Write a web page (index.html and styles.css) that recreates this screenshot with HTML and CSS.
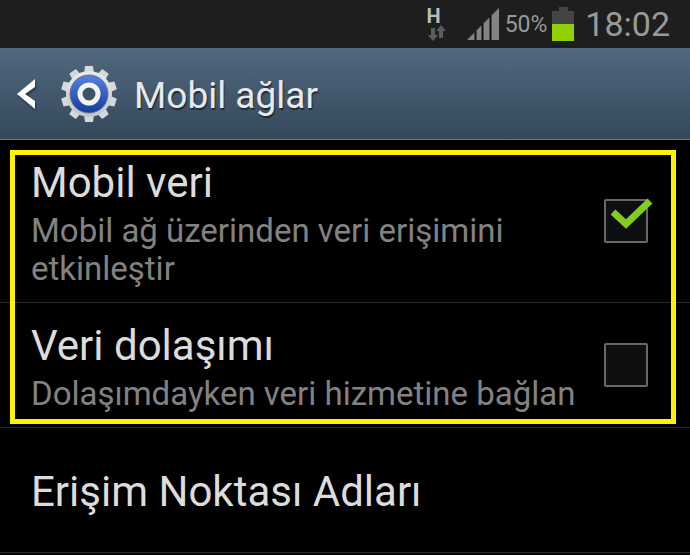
FILE: index.html
```html
<!DOCTYPE html>
<html lang="tr">
<head>
    <meta charset="UTF-8">
    <meta name="viewport" content="width=device-width, initial-scale=1.0">
    <title>Mobil ağlar</title>
    <link rel="stylesheet" href="styles.css">
</head>
<body>
    <div class="status-bar">
        <div class="network">
            <span class="network-type">H</span>
            <svg width="20" height="16" viewBox="0 0 20 16" fill="#5c5c5c">
                <path d="M4 3h4v7h3l-5 6-5-6h3z"/>
                <path d="M12 13h4V6h3l-5-6-5 6h3z"/>
            </svg>
        </div>
        <svg class="signal" width="32" height="32" viewBox="0 0 32 32">
            <path d="M0 32L32 0V32z" fill="#848484"/>
            <path d="M8 23v9M15 16v16M23 8v24" transform="translate(.5 0)" stroke="#101010" stroke-width="2"/>
        </svg>
        <span class="percent">50%</span>
        <svg class="battery" width="22" height="34" viewBox="0 0 22 34">
            <path d="M0 4h7V0h9v4h6v13H0z" fill="#444"/>
            <path d="M0 17h22v17H0z" fill="#90d000"/>
        </svg>
        <span class="clock">18:02</span>
    </div>

    <header class="header">
        <button class="back-btn" type="button" aria-label="Geri">
            <svg width="20" height="30" viewBox="0 0 20 30">
                <path d="M19 0v8L9 15l10 7v8L1 15z" fill="#fff"/>
            </svg>
        </button>
        <svg class="gear" width="56" height="56" viewBox="-28 -28 56 56">
            <defs>
                <linearGradient id="metal" x1="0" y1="0" x2="0" y2="1">
                    <stop offset="0" stop-color="#e8eaec"/>
                    <stop offset="1" stop-color="#c4c6c9"/>
                </linearGradient>
                <linearGradient id="blue" x1="0" y1="0" x2="0" y2="1">
                    <stop offset="0" stop-color="#5683e2"/>
                    <stop offset="1" stop-color="#153b9c"/>
                </linearGradient>
            </defs>
            <g fill="#d6d8da">
                <path id="teeth" d="M-5-20l1-8h8l1 8zM-5 20l1 8h8l1-8z"/>
                <use href="#teeth" transform="rotate(36)"/>
                <use href="#teeth" transform="rotate(72)"/>
                <use href="#teeth" transform="rotate(108)"/>
                <use href="#teeth" transform="rotate(144)"/>
            </g>
            <circle r="23" fill="url(#metal)"/>
            <circle r="19" fill="url(#blue)" stroke="#5f7292" stroke-width="1"/>
            <circle r="9" fill="#3f5366" stroke="#f2f3f5" stroke-width="5"/>
        </svg>
        <h1>Mobil ağlar</h1>
    </header>

    <main>
        <div class="highlighted">
            <div class="row">
                <label class="text" for="mobile-data">
                    <span class="title">Mobil veri</span>
                    <span class="summary">Mobil ağ üzerinden veri erişimini etkinleştir</span>
                </label>
                <div class="check">
                    <input type="checkbox" id="mobile-data" checked>
                    <svg class="tick" width="44" height="32" viewBox="0 0 44 32">
                        <path d="M3 14L16 26L40 3" fill="none" stroke="#83cd20" stroke-width="7"/>
                    </svg>
                </div>
            </div>
            <div class="row">
                <label class="text" for="roaming">
                    <span class="title">Veri dolaşımı</span>
                    <span class="summary">Dolaşımdayken veri hizmetine bağlan</span>
                </label>
                <div class="check">
                    <input type="checkbox" id="roaming">
                    <svg class="tick" width="44" height="32" viewBox="0 0 44 32">
                        <path d="M3 14L16 26L40 3" fill="none" stroke="#83cd20" stroke-width="7"/>
                    </svg>
                </div>
            </div>
            <div class="frame"></div>
        </div>
        <a class="row row-link" href="#apn">
            <span class="title">Erişim Noktası Adları</span>
        </a>
    </main>
</body>
</html>
```
FILE: styles.css
```css
* {
    box-sizing: border-box;
}
body {
    margin: 0;
    background: #000;
    color: #dcdcdc;
    font-family: Roboto, "Noto Sans", sans-serif;
}
svg {
    display: block;
    flex: none;
}

/* status bar */
.status-bar {
    display: flex;
    align-items: center;
    justify-content: flex-end;
    height: 48px;
    padding-right: 20px;
    background: #1e1e1e;
    color: #999;
}
.network {
    display: flex;
    flex-direction: column;
    align-items: center;
    margin-right: 20px;
}
.network-type {
    color: #bbb;
    font-size: 20px;
    font-weight: 700;
    line-height: 18px;
    margin-right: 6px;
}
.signal {
    margin-right: 6px;
}
.percent {
    font-size: 23px;
    margin-right: 5px;
}
.battery {
    margin-right: 11px;
}
.clock {
    font-size: 34px;
}

/* title bar */
.header {
    display: flex;
    align-items: center;
    height: 92px;
    padding-left: 16px;
    background: linear-gradient(#51687e, #34485a);
    border-bottom: 1px solid #66747f;
}
.back-btn {
    margin: 0 25px 0 0;
    padding: 0;
    border: none;
    background: none;
    cursor: pointer;
    filter: drop-shadow(1px 2px 1px rgba(0, 0, 0, 0.4));
}
.gear {
    margin-right: 17px;
}
.header h1 {
    margin: 0;
    padding-top: 4px;
    color: #e6eaee;
    font-size: 37px;
    font-weight: 400;
    line-height: 44px;
    text-shadow: 1px 2px 1px rgba(0, 0, 0, 0.5);
}

/* settings list */
.highlighted {
    position: relative;
}
.row {
    display: flex;
    align-items: center;
    justify-content: space-between;
    gap: 24px;
    padding: 18px 42px 14px 31px;
    border-bottom: 1px solid #2c2c2c;
}
.row-link {
    min-height: 125px;
    color: inherit;
    text-decoration: none;
}
.title {
    display: block;
    font-size: 42px;
    line-height: 50px;
}
.summary {
    display: block;
    margin-top: 4px;
    color: #828282;
    font-size: 33px;
    line-height: 38px;
}
.check {
    position: relative;
    flex: none;
    margin-bottom: 5px;
}
.check input {
    appearance: none;
    display: block;
    width: 44px;
    height: 44px;
    margin: 0;
    background: #0d0f11;
    border: 2px solid #686868;
    border-radius: 2px;
}
.tick {
    display: none;
    position: absolute;
    top: -1px;
    left: 6px;
    pointer-events: none;
}
.check input:checked + .tick {
    display: block;
}
.frame {
    position: absolute;
    top: 10px;
    right: 14px;
    bottom: 4px;
    left: 10px;
    border: 5px solid #fff200;
    pointer-events: none;
}
```
